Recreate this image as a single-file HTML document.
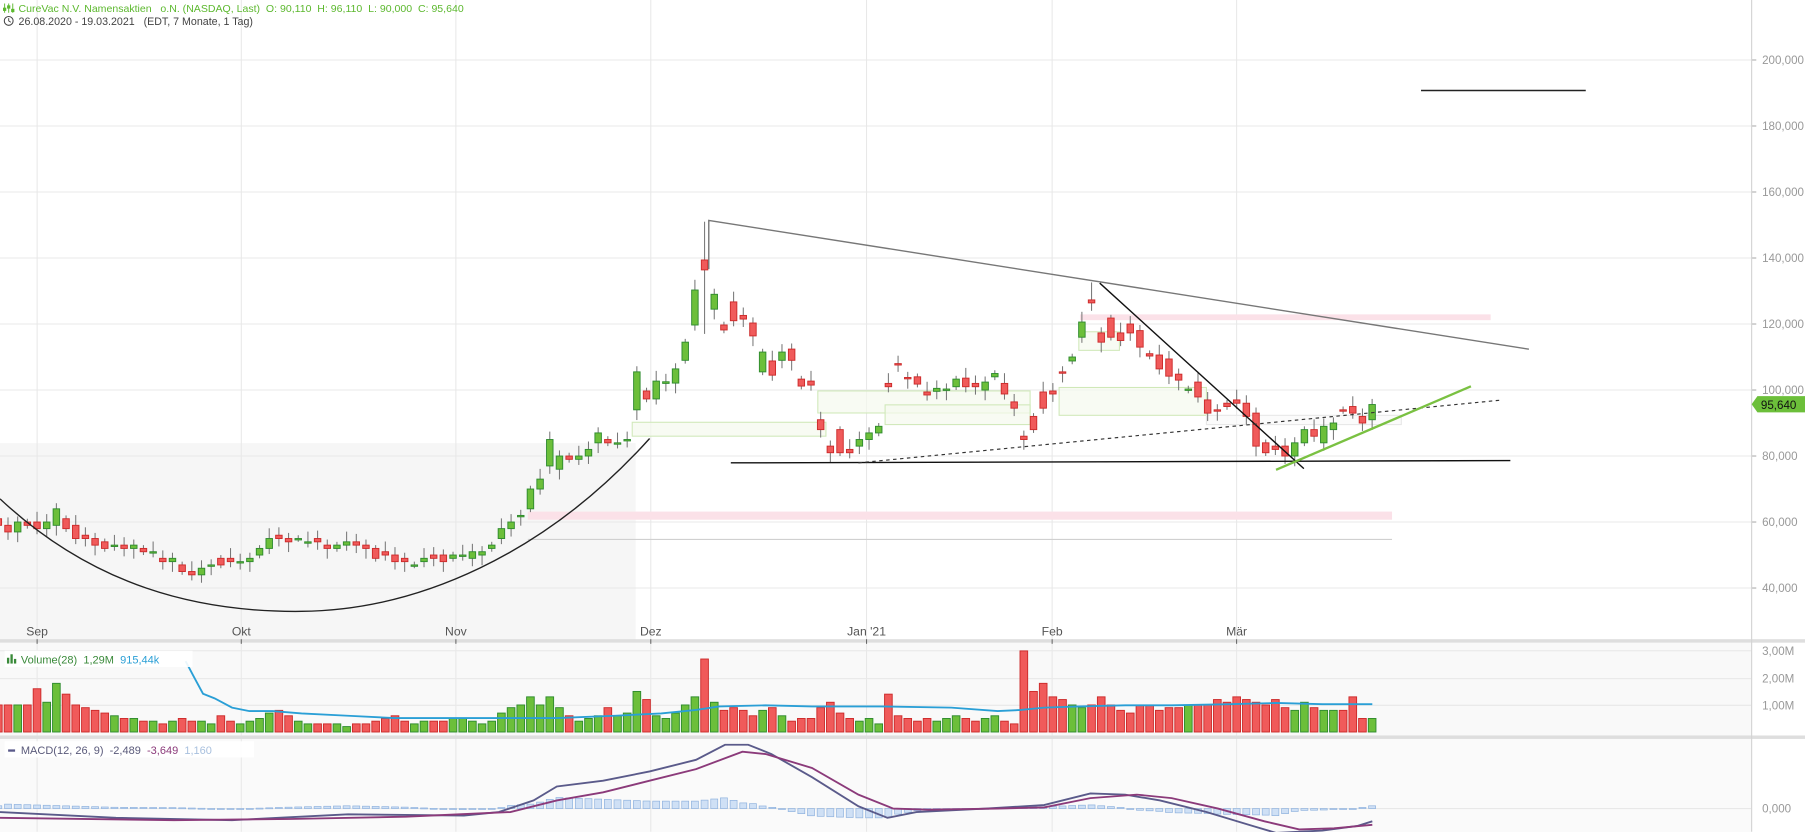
<!DOCTYPE html>
<html><head><meta charset="utf-8"><style>
html,body{margin:0;padding:0;background:#fff;overflow:hidden}
svg{display:block;font-family:"Liberation Sans",sans-serif}
</style></head><body>
<svg id="s" width="1805" height="832" viewBox="0 0 1556 717.2" xmlns="http://www.w3.org/2000/svg">
<rect width="1556" height="717.2" fill="#fff"/>
<rect x="0" y="554" width="1510" height="81" fill="#f9f9f9"/>
<rect x="0" y="637" width="1510" height="81" fill="#fafafa"/>
<rect x="0" y="382" width="548" height="170" fill="#f6f6f6"/>
<g id="grid" stroke="#e8e8e8" stroke-width="0.9"></g>
<rect x="0" y="551" width="1556" height="3" fill="#dedede"/>
<rect x="0" y="634" width="1556" height="3" fill="#dedede"/>
<line x1="1510" y1="0" x2="1510" y2="717" stroke="#d4d4d4" stroke-width="1"/>
<g stroke="#cfe8b8" stroke-width="0.9" fill="#f5faee" fill-opacity="0.7">
<rect x="545" y="364" width="167" height="12"/>
<rect x="705" y="337" width="183" height="19"/>
<rect x="763" y="349" width="125" height="17"/>
<rect x="930" y="286" width="35" height="16"/>
<rect x="913" y="334" width="127" height="24"/>
<rect x="1040" y="358" width="168" height="8" fill="#fafafa" stroke="#e6e6e6"/>
</g>
<rect x="931" y="271" width="354" height="5" fill="#fbe1e8"/>
<rect x="455" y="441" width="745" height="7" fill="#fbe1e8"/>
<line x1="455" y1="465" x2="1200" y2="465" stroke="#d0d0d0" stroke-width="0.9"/>
<g id="cand"></g>
<path d="M0,430 C80,505 170,528 260,527 C360,526 470,478 560,378" fill="none" stroke="#222" stroke-width="1.2"/>
<polyline points="611,232 611,190 1318,301" fill="none" stroke="#777" stroke-width="1.2"/>
<line x1="948" y1="244" x2="1124" y2="404" stroke="#111" stroke-width="1.2"/>
<line x1="630" y1="399" x2="1302" y2="397" stroke="#111" stroke-width="1.2"/>
<line x1="740" y1="399" x2="1293" y2="345" stroke="#333" stroke-width="1" stroke-dasharray="3,3"/>
<line x1="1100" y1="405" x2="1268" y2="333" stroke="#7ac142" stroke-width="2"/>
<line x1="1225" y1="78" x2="1367" y2="78" stroke="#222" stroke-width="1.2"/>
<g id="vol"></g>
<polyline fill="none" stroke="#2a9fd6" stroke-width="1.6" points="160,570 168,585 175,598 185,602 200,610 215,613 235,613 260,615 300,617 340,619 380,619 430,619 480,619 530,617 570,615 600,612 620,609 660,608 700,609 760,609 820,610 860,613 880,612 900,610 930,609 970,608 1010,608 1060,607 1100,606 1140,607 1183,607"/>
<g id="macd"></g>
<g font-size="10" fill="#999" id="ax"></g>
<g font-size="10.5" fill="#555" text-anchor="middle">
<text x="32" y="548">Sep</text><text x="208" y="548">Okt</text><text x="393" y="548">Nov</text><text x="561" y="548">Dez</text><text x="747" y="548">Jan '21</text><text x="907" y="548">Feb</text><text x="1066" y="548">Mär</text>
</g>
<g stroke="#666" stroke-width="0.9"><line x1="32" y1="551" x2="32" y2="555"/><line x1="208" y1="551" x2="208" y2="555"/><line x1="393" y1="551" x2="393" y2="555"/><line x1="561" y1="551" x2="561" y2="555"/><line x1="747" y1="551" x2="747" y2="555"/><line x1="907" y1="551" x2="907" y2="555"/><line x1="1066" y1="551" x2="1066" y2="555"/></g>
<polygon points="1510,348.5 1515,341.5 1556,341.5 1556,355.5 1515,355.5" fill="#6cbf3a"/>
<text x="1518" y="352.5" font-size="10" fill="#111">95,640</text>
<g fill="#5cb82e" stroke="#5cb82e" stroke-width="0.8">
<line x1="4" y1="3" x2="4" y2="11"/><line x1="7.5" y1="3" x2="7.5" y2="11"/><line x1="11" y1="3" x2="11" y2="11"/>
<rect x="3" y="7" width="2" height="2"/><rect x="6.5" y="5" width="2" height="2"/><rect x="10" y="8" width="2" height="2"/>
</g>
<text x="16" y="10.5" font-size="9.1" fill="#5cb82e" xml:space="preserve">CureVac N.V. Namensaktien   o.N. (NASDAQ, Last)  O: 90,110  H: 96,110  L: 90,000  C: 95,640</text>
<circle cx="7.5" cy="18" r="3.8" fill="none" stroke="#444" stroke-width="0.9"/>
<polyline points="7.5,15.6 7.5,18 9.3,19.2" fill="none" stroke="#444" stroke-width="0.8"/>
<text x="16" y="21.5" font-size="9.2" fill="#444" xml:space="preserve">26.08.2020 - 19.03.2021   (EDT, 7 Monate, 1 Tag)</text>
<rect x="4" y="561" width="162" height="14" fill="#fff" fill-opacity="0.9"/>
<rect x="6" y="567" width="2" height="5" fill="#3a8a3a"/><rect x="9" y="564" width="2" height="8" fill="#3a8a3a"/><rect x="12" y="568" width="2" height="4" fill="#3a8a3a"/>
<text x="18" y="572" font-size="9.5" fill="#3a8a3a" xml:space="preserve">Volume(28)  1,29M  <tspan fill="#2a9fd6">915,44k</tspan></text>
<rect x="4" y="639" width="215" height="14" fill="#fff" fill-opacity="0.9"/>
<rect x="7" y="646" width="6" height="2" fill="#5a5a8a"/>
<text x="18" y="650" font-size="9.5" fill="#5a5a7a" xml:space="preserve">MACD(12, 26, 9)  -2,489  <tspan fill="#8b3a7a">-3,649</tspan>  <tspan fill="#a8c0de">1,160</tspan></text>
</svg>
<script>
var NS="http://www.w3.org/2000/svg";
function el(p,t,a){var e=document.createElementNS(NS,t);for(var k in a)e.setAttribute(k,a[k]);p.appendChild(e);return e;}
function Y(p){return 393.1-(p-80)*2.845;}
var g=document.getElementById('grid'),ax=document.getElementById('ax');
[200,180,160,140,120,100,80,60,40].forEach(function(p){var y=Y(p);el(g,'line',{x1:0,y1:y,x2:1510,y2:y});el(g,'line',{x1:1510,y1:y,x2:1514,y2:y,stroke:'#aaa'});var t=el(ax,'text',{x:1519,y:y+3.5});t.textContent=p+',000';});
[561,585,608].forEach(function(y,i){el(g,'line',{x1:0,y1:y,x2:1510,y2:y});var t=el(ax,'text',{x:1519,y:y+3.5});t.textContent=(3-i)+',00M';});
el(g,'line',{x1:0,y1:697,x2:1510,y2:697});var t0=el(ax,'text',{x:1519,y:700.5});t0.textContent='0,000';
[32,208,393,561,747,907,1066].forEach(function(x){el(g,'line',{x1:x,y1:0,x2:x,y2:551});el(g,'line',{x1:x,y1:554,x2:x,y2:717});});
var D=[null,[61,59],[59,57],[57,60],[60,59],[60,58],[58,60],[59,64],[61,58],[59,55],[56,55],[55,53],[54,52],[53,53],[53,52],[52,53],[52,51],[51,51],[49,48],[48,49],[47,45],[45,44],[44,46],[47,47],[49,47],[49,48],
[48,48],[48,49],[50,52],[52,55],[56,55],[55,54],[55,55],[54,54],[55,54],[53,52],[52,53],[53,54],[54,53],[53,52],[52,49],[51,50],[50,48],[49,48],[47,47],[48,49],[50,49],[50,48],
[49,50],[50,50],[49,51],[50,51],[52,53],[55,58],[58,60],[62,62],[64,70],[70,73],[77,85],[76,80],[80,79],[79,80],[80,82],[84,87],[85,84],[84,84],[85,85],
[94,105.5],[99.7,97.3],[97.3,102.7],[102,102.5],[102.1,106.4],[109,114.5],[119.7,130.3],[139.4,136.4],[124.5,129],[119.7,118.2],[126.7,121],[122.6,121.5],[120.3,116.4],[105.5,111.5],[108.8,104.5],[109,111.5],[112.4,109],[103.3,101.2],[102.7,101.5],
[91,88],[83,81],[88,81],[82,81],[83,85],[85,87],[87,89],[102,101],[108,107.9],[103.8,103.5],[104,101.8],[99.4,98.5],[99.6,100.5],[100,100.3],[101,103.3],[103.6,101],[102,101],[100,102.4],[104,105],[102,98.8],[96.4,94.5],[86,85],[92,88],[99.4,94.5],[99.7,98.8],[105.5,105.4],[108.8,110],[116,120.6],[127.3,126.4],[117.3,114.5],[121.8,116],[117.3,115],[120,117.3],[118,113],[111,110.3],[110.6,106.4],[109.4,104.2],[104.8,103],[100,100.3],[102.4,97.9],
[97,93],[94,93.8],[96,95],[97,96],[96,92],[93,83],[84,81],[83,82],[83,80],[80,84],[84,88],[88,86],[84,89],[88,90],[94,93.8],[95,93],[92,90],[91,95.6]];
var V=[0,1.0,1.0,1.0,1.0,1.6,1.1,1.8,1.4,1.0,0.9,0.8,0.7,0.6,0.5,0.5,0.4,0.4,0.3,0.4,0.5,0.4,0.4,0.3,0.6,0.4,0.3,0.4,0.5,0.7,0.8,0.6,0.4,0.3,0.3,0.3,0.3,0.2,0.3,0.3,0.4,0.5,0.6,0.4,0.3,0.4,0.4,0.4,0.5,0.5,0.4,0.3,0.4,0.7,0.9,1.0,1.3,1.0,1.3,0.9,0.6,0.4,0.5,0.6,0.9,0.6,0.7,1.5,1.2,0.6,0.5,0.7,1.0,1.3,2.7,1.1,0.8,0.9,0.8,0.6,0.8,0.9,0.6,0.4,0.5,0.5,0.9,1.1,0.7,0.5,0.4,0.5,0.3,1.4,0.6,0.5,0.4,0.5,0.4,0.5,0.6,0.5,0.4,0.5,0.6,0.4,0.3,3.0,1.5,1.8,1.3,1.2,1.0,0.9,1.0,1.3,1.0,0.8,0.7,1.0,1.0,0.8,0.9,0.9,1.0,1.0,1.0,1.2,1.1,1.3,1.2,1.1,1.0,1.2,0.9,0.8,1.1,0.9,0.8,0.8,0.8,1.3];
var c=document.getElementById('cand'),v=document.getElementById('vol');
for(var i=1;i<D.length;i++){var x=549+8.34*(i-67),o=D[i][0],cl=D[i][1],up=cl>=o;
var hi=Math.max(o,cl)+1+(i*7%4)*0.7,lo=Math.min(o,cl)-1-(i*5%4)*0.7;if(i==74){hi=151;lo=117;}if(i==114)hi=132.6;
el(c,'line',{x1:x,y1:Y(hi),x2:x,y2:Y(lo),stroke:'#777','stroke-width':0.9});
var yt=Y(Math.max(o,cl)),h=Math.max(Y(Math.min(o,cl))-yt,1.2);
el(c,'rect',{x:x-2.8,y:yt,width:5.6,height:h,fill:up?'#6cbf3a':'#f05a5a',stroke:up?'#2e8b2e':'#cc2a2a','stroke-width':0.8});
var vh=(V[i]||0.5)*23.3;el(v,'rect',{x:x-3.3,y:631-vh,width:6.6,height:vh,fill:up?'#6cbf3a':'#f05a5a',stroke:up?'#2e8b2e':'#cc2a2a','stroke-width':0.8});}
function interp(P,x){for(var k=0;k<P.length-1;k++){if(x>=P[k][0]&&x<=P[k+1][0]){var f=(x-P[k][0])/(P[k+1][0]-P[k][0]);return P[k][1]+f*(P[k+1][1]-P[k][1]);}}return P[P.length-1][1];}
var M=[[0,700],[100,705],[200,707],[240,705],[300,702],[400,703],[430,700],[460,690],[480,678],[520,673],[560,665],[600,655],[625,642],[645,642],[665,650],[700,670],[740,695],[765,705],[790,700],[850,697],[900,694],[940,684],[970,685],[1000,690],[1040,700],[1080,712],[1100,718],[1140,716],[1170,712],[1183,708]];
var S=[[0,705],[150,707],[250,706],[350,704],[440,700],[480,690],[520,683],[560,673],[600,663],[640,648],[660,650],[700,662],[740,685],[770,697],[800,698],[860,697],[900,696],[940,688],[980,685],[1010,688],[1050,697],[1090,708],[1120,715],[1150,714],[1183,711]];
var mg=document.getElementById('macd');
for(var i=1;i<D.length;i++){var x=549+8.34*(i-67);var d=(interp(S,x)-interp(M,x))*0.8;var y0=697;var yy=y0-d;el(mg,'rect',{x:x-3,y:Math.min(y0,yy),width:6,height:Math.max(Math.abs(d),0.8),fill:'#cfe0f5',stroke:'#8fb2de','stroke-width':0.6});}
function pl(P,col){el(mg,'polyline',{points:P.map(function(p){return p.join(',')}).join(' '),fill:'none',stroke:col,'stroke-width':1.6});}
pl(M,'#5a5a8a');pl(S,'#8b3a7a');
</script>
</body></html>
